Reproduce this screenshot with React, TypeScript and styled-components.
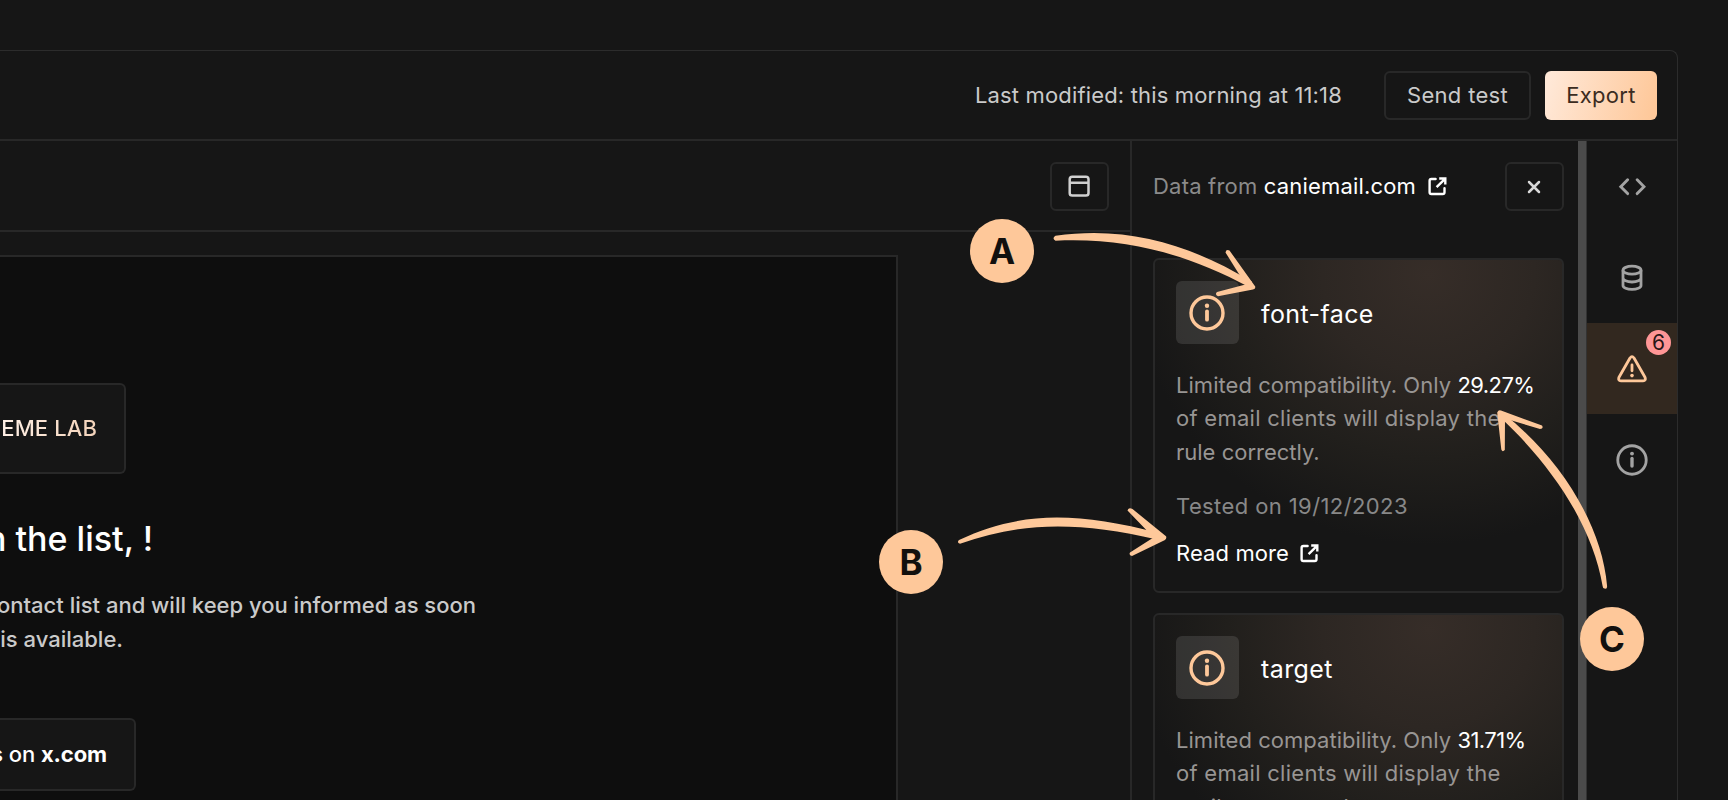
import React from "react";
import styled, { createGlobalStyle, css } from "styled-components";

const peach = "#fec89a";
const line = "#282828";

const GlobalStyle = createGlobalStyle`
  * { box-sizing: border-box; }
  body { margin: 0; background: #161616; font-family: Inter, "Liberation Sans", sans-serif; font-size: 22px; -webkit-font-smoothing: antialiased; }
  p, h1, h2 { margin: 0; font-weight: 400; }
  svg { display: block; flex: none; }
`;

const Page = styled.main`
  position: relative;
  width: 1728px;
  height: 800px;
  overflow: hidden;
  padding-top: 50px;
  background: #161616;
`;

const AppWindow = styled.section`
  width: 1678px;
  height: 750px;
  display: flex;
  flex-direction: column;
  overflow: hidden;
  border-top: 1px solid #2c2c2c;
  border-right: 1px solid #2c2c2c;
  border-top-right-radius: 8px;
`;

const Header = styled.header`
  flex: none;
  height: 90px;
  display: flex;
  align-items: center;
  justify-content: flex-end;
  padding: 0 20px 0 0;
  border-bottom: 2px solid ${line};
`;

const Tracked = styled.span<{ $tracking?: number }>`
  white-space: pre;
  letter-spacing: ${(p) => p.$tracking ?? 0}px;
`;

const Modified = styled.div`
  margin-right: 42px;
  padding-bottom: 1px;
  color: #cacaca;
`;

const buttonBase = css`
  display: flex;
  align-items: center;
  justify-content: center;
  height: 49px;
  padding: 0 0 1px;
  border-radius: 6px;
  font: inherit;
  letter-spacing: 0.3px;
`;

const OutlineButton = styled.button<{ $width: number }>`
  ${buttonBase}
  width: ${(p) => p.$width}px;
  border: 2px solid ${line};
  background: #161616;
  color: #cacaca;
`;

const IconButton = styled(OutlineButton)`
  padding: 0 1px 0 0;
`;

const ExportButton = styled.button`
  ${buttonBase}
  width: 112px;
  margin-left: 14px;
  border: 0;
  background: linear-gradient(105deg, #ffe8d7 5%, ${peach} 95%);
  color: #3b2c21;
`;

const Body = styled.div`
  flex: 1;
  min-height: 0;
  display: flex;
`;

const Workspace = styled.div`
  width: 1130px;
  flex: none;
  display: flex;
  flex-direction: column;
`;

const Toolbar = styled.div`
  height: 91px;
  flex: none;
  display: flex;
  align-items: center;
  justify-content: flex-end;
  padding: 1px 21px 0 0;
  border-bottom: 2px solid ${line};
`;

const Stage = styled.div`
  flex: 1;
  padding-top: 23px;
  display: flex;
  min-height: 0;
`;

const Email = styled.article`
  width: 898px;
  padding-top: 126px;
  border-top: 2px solid ${line};
  border-right: 2px solid ${line};
  background: #0e0e0e;
  overflow: hidden;
`;

const EmailBox = styled.div<{ $width: number; $height: number }>`
  display: flex;
  align-items: center;
  justify-content: flex-end;
  width: ${(p) => p.$width}px;
  height: ${(p) => p.$height}px;
  padding: 0 27px 1px 0;
  border: 2px solid ${line};
  border-left: 0;
  border-radius: 0 6px 6px 0;
  background: #161616;
  color: #fff;
  font-weight: 500;
`;

const BrandName = styled.span`
  background: linear-gradient(90deg, #fff0e6, #f3d3ba);
  background-clip: text;
  -webkit-background-clip: text;
  color: transparent;
  white-space: pre;
  font-weight: 500;
  letter-spacing: 0.1px;
`;

const EmailTitle = styled.h1`
  display: flex;
  justify-content: flex-end;
  width: 153px;
  margin-top: 44px;
  font-size: 34px;
  line-height: 42px;
  font-weight: 500;
  color: #fff;
`;

const EmailLine = styled.p<{ $width: number }>`
  display: flex;
  justify-content: flex-end;
  width: ${(p) => p.$width}px;
  line-height: 33.3px;
  font-weight: 500;
  color: #cacaca;
`;

const EmailText = styled.div`
  margin: 29.4px 0 61.6px;
`;

const Panel = styled.aside`
  width: 448px;
  flex: none;
  padding: 0 14px 0 21px;
  border-left: 2px solid ${line};
  overflow: hidden;
`;

const PanelHeader = styled.div`
  height: 91px;
  display: flex;
  align-items: center;
  justify-content: space-between;
`;

const Source = styled.div`
  display: flex;
  align-items: center;
  padding: 0 0 2px;
  color: #8b8b8b;
`;

const SourceLink = styled.div`
  display: flex;
  align-items: center;
  gap: 12px;
  color: #fff;
`;

const Strong = styled.span<{ $tracking?: number }>`
  color: #fff;
  white-space: pre;
  letter-spacing: ${(p) => p.$tracking ?? 0}px;
`;

const CardList = styled.div`
  display: flex;
  flex-direction: column;
  gap: 20px;
  margin-top: 26px;
`;

const Card = styled.article`
  height: 335px;
  flex: none;
  padding: 21px;
  border: 2px solid ${line};
  border-radius: 6px;
  background: radial-gradient(ellipse 295px 270px at 67% 5%, #362d28 0%, #2d2723 36%, #211f1c 68%, #161616 100%) border-box;
`;

const CardHead = styled.div`
  display: flex;
  align-items: center;
  gap: 22px;
`;

const IconTile = styled.div`
  width: 63px;
  height: 63px;
  display: grid;
  place-items: center;
  padding: 0 1px 0 0;
  border-radius: 6px;
  background: rgba(255, 255, 255, 0.11);
  color: ${peach};
`;

const CardTitle = styled.h2`
  font-size: 25px;
  padding-top: 3px;
  letter-spacing: 0.4px;
  color: #fff;
`;

const CardCopy = styled.p`
  margin-top: 25px;
  line-height: 33.3px;
  color: #989593;
  white-space: pre;
`;

const Tested = styled.p`
  margin-top: 20px;
  line-height: 34px;
  color: #888;
`;

const ReadMore = styled.div`
  display: flex;
  align-items: center;
  gap: 11px;
  height: 34px;
  margin-top: 13px;
  letter-spacing: 0.1px;
  color: #fff;
`;

const ScrollTrack = styled.div`
  width: 9px;
  flex: none;
  background: #4b4b4b;
  border-right: 1px solid #333;
`;

const Rail = styled.nav`
  width: 90px;
  flex: none;
`;

const RailItem = styled.div<{ $active?: boolean }>`
  position: relative;
  height: 91px;
  display: grid;
  place-items: center;
  background: ${(p) => (p.$active ? "#32281f" : "transparent")};
  color: ${(p) => (p.$active ? peach : "#a3a3a3")};
`;

const Count = styled.span`
  position: absolute;
  top: 7px;
  right: 6px;
  width: 25px;
  height: 25px;
  border-radius: 50%;
  background: #ff9696;
  color: #2a1616;
  font-size: 21px;
  line-height: 25px;
  text-align: center;
`;

const Marker = styled.div<{ $x: number; $y: number }>`
  position: absolute;
  left: ${(p) => p.$x - 32}px;
  top: ${(p) => p.$y - 32}px;
  width: 64px;
  height: 64px;
  border-radius: 50%;
  background: ${peach};
  color: #12100e;
  font-size: 35px;
  font-weight: 700;
  line-height: 64px;
  text-align: center;
`;

const ArrowLayer = styled.svg`
  position: absolute;
  inset: 0;
  pointer-events: none;
`;

const InfoIcon = ({ size, stroke }: { size: number; stroke: number }) => (
  <svg width={size} height={size} viewBox="0 0 36 36" fill="none" stroke="currentColor" strokeWidth={stroke}>
    <circle cx="18" cy="18" r="16" />
    <path d="M18 16.3V24.7" strokeWidth="3.8" strokeLinecap="round" />
    <circle cx="18" cy="10.8" r="2.2" fill="currentColor" stroke="none" />
  </svg>
);

const ExternalIcon = () => (
  <svg width="19" height="21" viewBox="0 -2 19 21" fill="none" stroke="#fff" strokeWidth="2.4">
    <path d="M7.6 2H3.4Q1.6 2 1.6 3.8V15.2Q1.6 17 3.4 17H14.7Q16.5 17 16.5 15.2V11.2" strokeLinecap="round" />
    <path d="M11.2 1.5H17.3V7.6M17 1.8L8.6 10.2" />
  </svg>
);

const BrowserIcon = () => (
  <svg width="22" height="22" viewBox="0 0 22 22" fill="none" stroke="#d0d0d0" strokeWidth="2.5">
    <rect x="1.7" y="1.7" width="18.8" height="18.8" rx="2.6" />
    <path d="M1.7 7.7H20.5" />
  </svg>
);

const CloseIcon = () => (
  <svg width="14" height="14" viewBox="0 0 14 14" stroke="#d8d8d8" strokeWidth="2.5" strokeLinecap="round">
    <path d="M2 2L12 12M12 2L2 12" />
  </svg>
);

const CodeIcon = () => (
  <svg width="28" height="20" viewBox="0 0 28 20" fill="none" stroke="currentColor" strokeWidth="2.9" strokeLinecap="round">
    <path d="M9.6 2.8L2.8 9.7L9.6 16.6M19.2 2.8L26 9.7L19.2 16.6" />
  </svg>
);

const DatabaseIcon = () => (
  <svg width="22" height="28" viewBox="0 0 22 28" fill="none" stroke="currentColor" strokeWidth="2.8">
    <ellipse cx="11" cy="6.2" rx="9" ry="4" />
    <path d="M2 6.2V21.5C2 23.8 6 25.4 11 25.4S20 23.8 20 21.5V6.2M2 13.8C2 16.2 6 18 11 18S20 16.2 20 13.8" />
  </svg>
);

const WarningIcon = () => (
  <svg width="30" height="28" viewBox="0 0 30 28" fill="none" stroke="currentColor" strokeWidth="2.8" strokeLinejoin="round">
    <path d="M13 3Q15 .4 17 3L28 22.3Q29.2 25.7 26 25.9H4Q.8 25.7 2 22.3Z" />
    <path d="M15 10V15.8" strokeLinecap="round" />
    <circle cx="15" cy="20.6" r="1.8" fill="currentColor" stroke="none" />
  </svg>
);

const Arrows = () => (
  <ArrowLayer width="1728" height="800" viewBox="0 0 1728 800" fill={peach}>
    <path d="M1055.5 235.8C1127 225.5 1190 244.3 1252 281.8L1249 287C1188 254.3 1126 237.3 1055.5 240.8Q1051.5 238 1055.5 235.8Z" />
    <path d="M1225.5 252.5Q1226 249 1229.5 250.5L1255.2 286.5Q1255.8 288.8 1253 289.5L1218 296.2Q1214.5 294.8 1217 292L1245.5 284.5Z" />
    <path d="M959 540C1022 510.5 1077 512.3 1159 533L1157 539.5C1077 521 1022 522 960 543.7Q956.5 542.8 959 540Z" />
    <path d="M1127.5 510.5Q1128.5 507 1132.5 509L1166 536.3Q1167 538 1165 540L1132 556Q1128.5 555.5 1130 552.5L1153.5 537.5Z" />
    <path d="M1603.2 588Q1607.3 590.3 1607.1 586C1602 526 1562 460 1504 414L1501 418C1554 467.5 1593 528 1602.6 586Z" />
    <path d="M1497.2 412.5Q1498.5 409.5 1501 410.5L1542 425.5Q1544 428.5 1540 429L1505 418.5L1504.8 450Q1502.5 452.5 1501.3 449.5Z" />
  </ArrowLayer>
);

type RuleProps = { name: string; score: string; lastLine: string };

const RuleCard = ({ name, score, lastLine }: RuleProps) => (
  <Card>
    <CardHead>
      <IconTile><InfoIcon size={36} stroke={3.4} /></IconTile>
      <CardTitle>{name}</CardTitle>
    </CardHead>
    <CardCopy>
      <Tracked $tracking={0.04}>Limited compatibility. Only </Tracked><Strong $tracking={-0.55}>{score}</Strong>{"\n"}
      <Tracked $tracking={0.27}>of email clients will display the</Tracked>{"\n"}
      {lastLine}
    </CardCopy>
    <Tested><Tracked $tracking={0.4}>Tested on 19/12/2023</Tracked></Tested>
    <ReadMore>Read more <ExternalIcon /></ReadMore>
  </Card>
);

export default function App() {
  return (
    <Page>
      <GlobalStyle />
      <AppWindow>
        <Header>
          <Modified><Tracked $tracking={0.16}>Last modified: this morning at 11:18</Tracked></Modified>
          <OutlineButton $width={147}>Send test</OutlineButton>
          <ExportButton>Export</ExportButton>
        </Header>
        <Body>
          <Workspace>
            <Toolbar>
              <IconButton $width={59}><BrowserIcon /></IconButton>
            </Toolbar>
            <Stage>
              <Email>
                <EmailBox $width={126} $height={91}><BrandName>EME LAB</BrandName></EmailBox>
                <EmailTitle><Tracked>n the list, !</Tracked></EmailTitle>
                <EmailText>
                  <EmailLine $width={476}><Tracked>ontact list and will keep you informed as soon</Tracked></EmailLine>
                  <EmailLine $width={123}><Tracked>is available.</Tracked></EmailLine>
                </EmailText>
                <EmailBox $width={136} $height={73}><Tracked $tracking={-0.1}>s on <b>x.com</b></Tracked></EmailBox>
              </Email>
            </Stage>
          </Workspace>
          <Panel>
            <PanelHeader>
              <Source>
                <Tracked $tracking={0.2}>Data from </Tracked>
                <SourceLink><Strong $tracking={0.17}>caniemail.com</Strong><ExternalIcon /></SourceLink>
              </Source>
              <IconButton $width={59}><CloseIcon /></IconButton>
            </PanelHeader>
            <CardList>
              <RuleCard name="font-face" score="29.27%" lastLine="rule correctly." />
              <RuleCard name="target" score="31.71%" lastLine="attribute correctly." />
            </CardList>
          </Panel>
          <ScrollTrack />
          <Rail>
            <RailItem><CodeIcon /></RailItem>
            <RailItem><DatabaseIcon /></RailItem>
            <RailItem $active><WarningIcon /><Count>6</Count></RailItem>
            <RailItem><InfoIcon size={32} stroke={3.2} /></RailItem>
          </Rail>
        </Body>
      </AppWindow>
      <Arrows />
      <Marker $x={1002} $y={251}>A</Marker>
      <Marker $x={911} $y={562}>B</Marker>
      <Marker $x={1612} $y={639}>C</Marker>
    </Page>
  );
}
